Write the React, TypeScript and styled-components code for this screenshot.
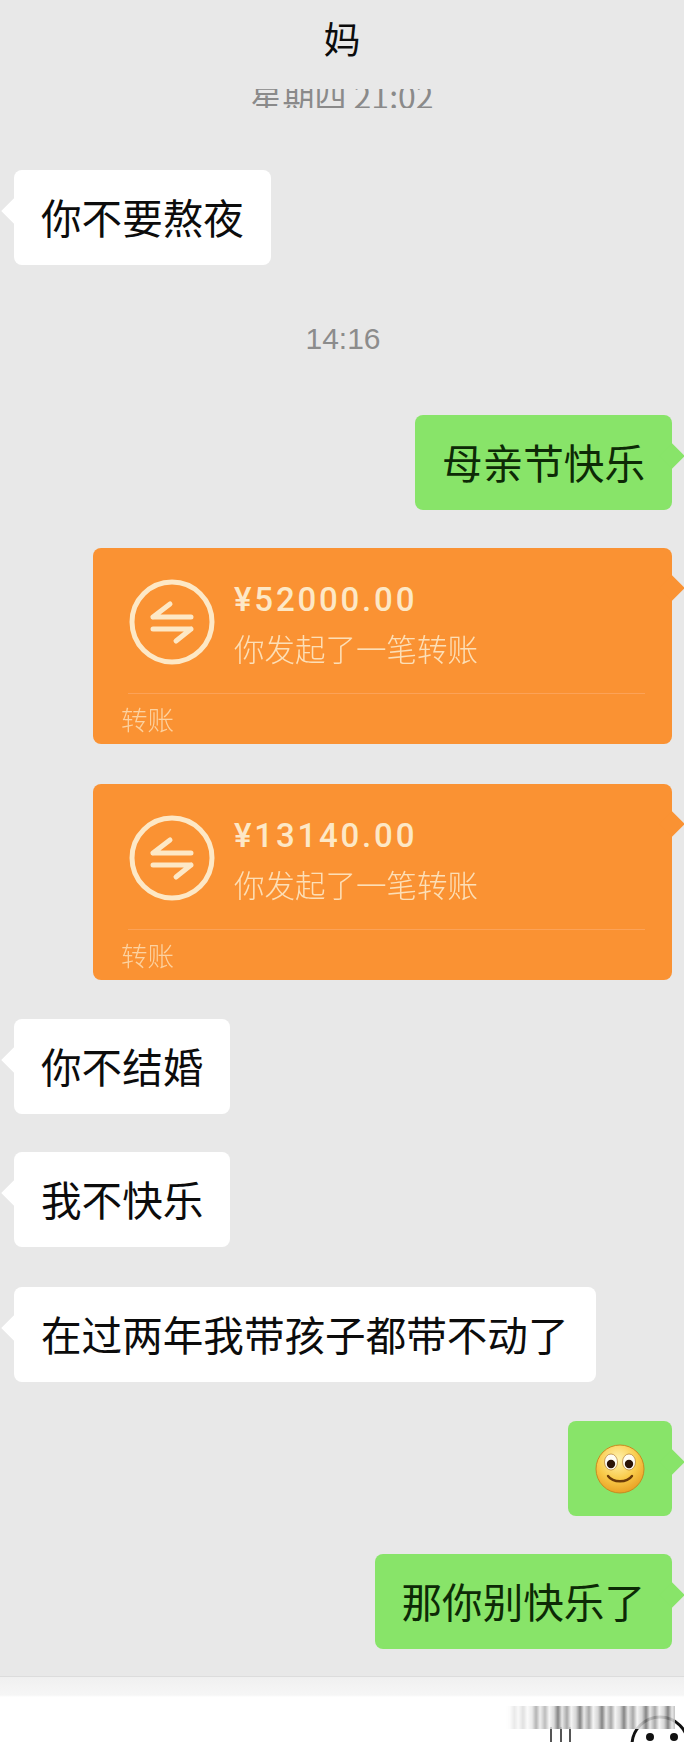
import React from "react";
import styled, { createGlobalStyle } from "styled-components";

const GlobalStyle = createGlobalStyle`
  html, body { margin: 0; padding: 0; background: #e8e8e8; }
  body { font-family: "Noto Sans CJK SC", "Liberation Sans", sans-serif; }
`;

const Page = styled.div`
  width: 684px;
  height: 1742px;
  overflow: hidden;
  display: flex;
  flex-direction: column;
  background: #e8e8e8;
`;

const Header = styled.div`
  height: 76px;
  display: flex;
  align-items: center;
  justify-content: center;
  font-size: 37px;
  color: #0c0c0c;
`;

/* the older time stamp is half cut off under the title bar */
const ClippedTime = styled.div`
  margin-top: 13px;
  height: 19px;
  overflow: hidden;
  display: flex;
  justify-content: center;
  align-items: flex-end;
  color: #8a8a8a;
  font-size: 32px;
  line-height: 32px;
`;

const ClippedInner = styled.span`
  display: block;
  transform: translateY(3px);
  white-space: nowrap;
`;

const Thread = styled.div`
  display: flex;
  flex-direction: column;
  margin-top: 62px;
  padding: 0 12px 0 14px;
`;

const Time = styled.div`
  margin: 56px 0 58px;
  height: 36px;
  line-height: 36px;
  text-align: center;
  font-family: "Liberation Sans", sans-serif;
  font-size: 30px;
  color: #8c8c8c;
`;

const Row = styled.div<{ $mine?: boolean; $gap?: number }>`
  display: flex;
  justify-content: ${(p) => (p.$mine ? "flex-end" : "flex-start")};
  margin-top: ${(p) => p.$gap ?? 0}px;
`;

const Bubble = styled.div<{ $mine?: boolean; $tailTop?: number }>`
  position: relative;
  box-sizing: border-box;
  height: 95px;
  padding: 0 27px 1px;
  display: flex;
  align-items: center;
  border-radius: 8px;
  font-size: 40.6px;
  line-height: 1;
  white-space: nowrap;
  color: ${(p) => (p.$mine ? "#0d2a06" : "#0c0c0c")};
  background: ${(p) => (p.$mine ? "#88e469" : "#ffffff")};

  &::after {
    content: "";
    position: absolute;
    top: ${(p) => p.$tailTop ?? 32}px;
    ${(p) => (p.$mine ? "right: -9px;" : "left: -9px;")}
    width: 18px;
    height: 18px;
    transform: rotate(45deg);
    background: inherit;
  }
`;

const EmojiBubble = styled(Bubble)`
  width: 104px;
  justify-content: center;
  padding: 0;
`;

const TransferCard = styled.div`
  position: relative;
  box-sizing: border-box;
  width: 579px;
  height: 196px;
  border-radius: 8px;
  background: #fa9233;
  color: #fde8c6;
  display: flex;
  flex-direction: column;

  &::after {
    content: "";
    position: absolute;
    top: 31px;
    right: -9px;
    width: 18px;
    height: 18px;
    transform: rotate(45deg);
    background: inherit;
  }
`;

const CardBody = styled.div`
  display: flex;
  align-items: flex-start;
  gap: 19px;
  height: 145px;
  box-sizing: border-box;
  padding: 31px 0 0 36px;
`;

const CardText = styled.div`
  display: flex;
  flex-direction: column;
`;

const Amount = styled.div`
  font-family: Roboto, sans-serif;
  font-size: 33px;
  font-weight: 500;
  line-height: 36px;
  letter-spacing: 2.8px;
  margin-top: 3px;
`;

const Sub = styled.div`
  font-size: 30.5px;
  line-height: 36px;
  margin-top: 12px;
  font-weight: 300;
  opacity: 0.9;
`;

const Divider = styled.div`
  height: 1px;
  margin: 0 27px 0 35px;
  background: #fca257;
`;

const CardLabel = styled.div`
  font-size: 26.5px;
  line-height: 30px;
  margin: 10px 0 0 28px;
  opacity: 0.75;
  font-weight: 300;
`;

const BottomBar = styled.div`
  position: relative;
  margin-top: 27px;
  flex: 1;
  border-top: 1px solid #dcdcdc;
  background: linear-gradient(#f0f0f0 0, #f6f6f6 18px, #ffffff 20px);
`;

/* smeared strip of the retouched picture */
const Smear = styled.div`
  position: absolute;
  left: 505px;
  top: 29px;
  width: 170px;
  height: 23px;
  opacity: 0.85;
  background: repeating-linear-gradient(
    90deg,
    #f4f4f4 0,
    #cfcfcf 5px,
    #6f6f6f 9px,
    #e4e4e4 13px,
    #9a9a9a 18px,
    #f0f0f0 22px
  );
  mask-image: linear-gradient(90deg, transparent 0, #000 30%);
`;

const FaceIcon = styled.svg`
  position: absolute;
  left: 630px;
  top: 36px;
`;

const Sticks = styled.svg`
  position: absolute;
  left: 545px;
  top: 50px;
`;

const TransferIcon = () => (
  <svg width="86" height="86" viewBox="0 0 86 86" fill="none" stroke="#fde8c6" strokeWidth="5" strokeLinecap="round" strokeLinejoin="round">
    <circle cx="43" cy="43" r="40" />
    <path d="M24 38H62M24 38L41 25" />
    <path d="M24 50H62M62 50L47 62" />
  </svg>
);

const SmileEmoji = () => (
  <svg width="50" height="50" viewBox="0 0 50 50">
    <defs>
      <radialGradient id="face" cx="45%" cy="30%" r="75%">
        <stop offset="0%" stopColor="#fff3b0" />
        <stop offset="55%" stopColor="#f9cb4a" />
        <stop offset="100%" stopColor="#e79a1e" />
      </radialGradient>
    </defs>
    <circle cx="25" cy="25" r="24" fill="url(#face)" stroke="#c98a20" strokeWidth="1" />
    <ellipse cx="16" cy="18" rx="6.5" ry="8" fill="#fffdf2" stroke="#a5671a" strokeWidth="0.6" />
    <ellipse cx="34" cy="18" rx="6.5" ry="8" fill="#fffdf2" stroke="#a5671a" strokeWidth="0.6" />
    <circle cx="16" cy="20" r="4.2" fill="#2a1206" />
    <circle cx="34" cy="20" r="4.2" fill="#2a1206" />
    <path d="M13 32C18 39 32 39 37 32" fill="none" stroke="#6b3a08" strokeWidth="2.4" strokeLinecap="round" />
  </svg>
);

const Transfer = ({ amount }: { amount: string }) => (
  <TransferCard>
    <CardBody>
      <TransferIcon />
      <CardText>
        <Amount>{amount}</Amount>
        <Sub>你发起了一笔转账</Sub>
      </CardText>
    </CardBody>
    <Divider />
    <CardLabel>转账</CardLabel>
  </TransferCard>
);

export default function App() {
  return (
    <Page>
      <GlobalStyle />
      <Header>妈</Header>
      <ClippedTime>
        <ClippedInner>星期四 21:02</ClippedInner>
      </ClippedTime>
      <Thread>
        <Row>
          <Bubble>你不要熬夜</Bubble>
        </Row>
        <Time>14:16</Time>
        <Row $mine>
          <Bubble $mine>母亲节快乐</Bubble>
        </Row>
        <Row $mine $gap={38}>
          <Transfer amount="¥52000.00" />
        </Row>
        <Row $mine $gap={40}>
          <Transfer amount="¥13140.00" />
        </Row>
        <Row $gap={39}>
          <Bubble>你不结婚</Bubble>
        </Row>
        <Row $gap={38}>
          <Bubble>我不快乐</Bubble>
        </Row>
        <Row $gap={40}>
          <Bubble>在过两年我带孩子都带不动了</Bubble>
        </Row>
        <Row $mine $gap={39}>
          <EmojiBubble $mine>
            <SmileEmoji />
          </EmojiBubble>
        </Row>
        <Row $mine $gap={38}>
          <Bubble $mine>那你别快乐了</Bubble>
        </Row>
      </Thread>
      <BottomBar>
        <Sticks width="40" height="20" viewBox="0 0 40 20" fill="none" stroke="#555" strokeWidth="2">
          <path d="M6 0V16M2 16V20M16 0V20M25 0V16M29 16V20" />
        </Sticks>
        <FaceIcon width="60" height="42" viewBox="0 0 60 42" fill="none">
          <circle cx="30" cy="32" r="28" stroke="#111" strokeWidth="3" />
          <circle cx="20" cy="24" r="4" fill="#111" />
          <circle cx="44" cy="24" r="4" fill="#111" />
        </FaceIcon>
        <Smear />
      </BottomBar>
    </Page>
  );
}
